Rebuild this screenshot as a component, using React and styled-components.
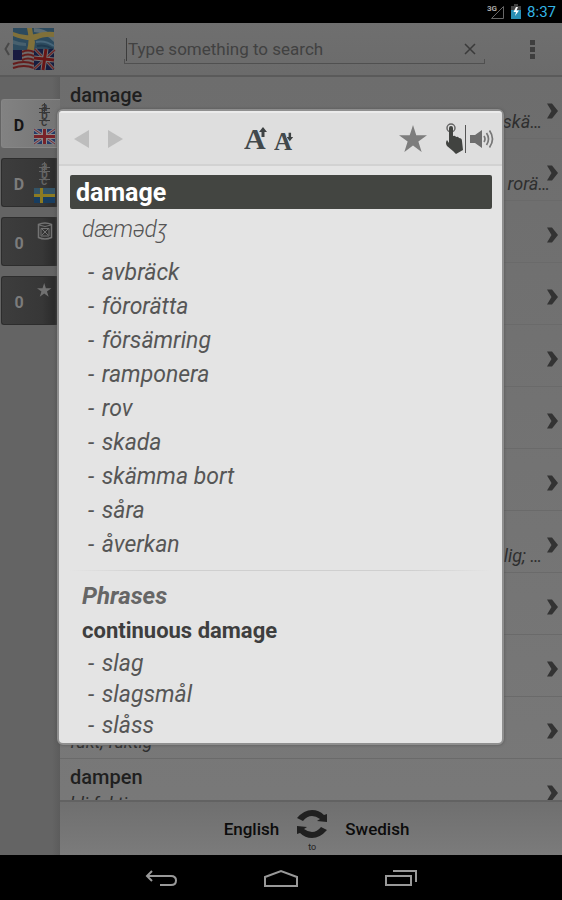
import React, { useState } from "react";
import styled, { createGlobalStyle } from "styled-components";

const GlobalStyle = createGlobalStyle`
  * {
    box-sizing: border-box;
  }
  body {
    margin: 0;
    background: #000;
    font-family: Roboto, "Noto Sans", sans-serif;
  }
  button {
    border: 0;
    padding: 0;
    background: none;
    font-family: inherit;
    cursor: pointer;
  }
  h1, h2, h3, p, ul {
    margin: 0;
    padding: 0;
  }
  ul {
    list-style: none;
  }
  svg {
    display: block;
  }
`;

const Screen = styled.div`
  position: relative;
  display: flex;
  flex-direction: column;
  height: 100vh;
  overflow: hidden;
`;

const StatusBar = styled.div`
  display: flex;
  align-items: center;
  justify-content: flex-end;
  gap: 6px;
  height: 23px;
  padding-right: 6px;
  background: #000;
  color: #33b5e5;
  font-size: 15px;
  line-height: 26px;
  flex-shrink: 0;
`;

const ActionBar = styled.header`
  display: flex;
  align-items: center;
  height: 54px;
  padding: 0 20px 0 4px;
  background: linear-gradient(#6f6f6f, #6b6b6b);
  border-bottom: 2px solid #5a5a5a;
  flex-shrink: 0;
`;

const UpButton = styled.button`
  display: flex;
  align-items: center;
  gap: 2px;
`;

const SearchBox = styled.form`
  position: relative;
  display: flex;
  align-items: center;
  flex: 1;
  height: 30px;
  margin: 0 37px 0 68px;
  padding-right: 9px;

  &::after {
    content: "";
    position: absolute;
    left: 0;
    right: 0;
    bottom: 0;
    height: 4px;
    border: 1px solid #505050;
    border-top: 0;
  }
`;

const SearchInput = styled.input`
  flex: 1;
  min-width: 0;
  height: 23px;
  padding: 0 0 0 1px;
  border: 0;
  border-left: 1px solid #3c3c3c;
  margin-left: 2px;
  background: none;
  outline: none;
  font-family: inherit;
  font-size: 17px;
  color: #222;

  &::placeholder {
    color: #414141;
    opacity: 1;
  }
`;

const Main = styled.div`
  display: flex;
  flex: 1;
  min-height: 0;
`;

const Sidebar = styled.nav`
  display: flex;
  flex-direction: column;
  gap: 10px;
  width: 60px;
  padding: 22px 0 0 1px;
  background: linear-gradient(90deg, #646464 52px, #5c5c5c);
  flex-shrink: 0;
`;

const Tab = styled.button`
  display: flex;
  align-items: center;
  height: 49px;
  padding-left: 10px;
  border-radius: 3px 0 0 3px;
  border: 1px solid ${(props) => (props.$active ? "#868686" : "#2d2d2d")};
  border-right: 0;
  background: ${(props) =>
    props.$active
      ? "linear-gradient(90deg, #828282, #747474)"
      : "linear-gradient(90deg, #3d3d3d, #373737 40px, #262626)"};
  color: ${(props) => (props.$active ? "#151515" : "#7c7c7c")};
  font-size: 16px;
  font-weight: 700;
`;

const TabLabel = styled.span`
  width: 14px;
  padding-top: 4px;
  text-align: center;
`;

const TabArt = styled.span`
  align-self: flex-start;
  margin: 3px 0 0 7px;
`;

const Content = styled.main`
  display: flex;
  flex-direction: column;
  flex: 1;
  min-width: 0;
  background: linear-gradient(#6d6d6d, #797979);
`;

const WordList = styled.ul`
  flex: 1;
  min-height: 0;
  overflow: hidden;
`;

const WordRow = styled.li`
  display: flex;
  align-items: center;
  height: 62px;
  padding: 0 3px 0 10px;
  border-bottom: 1px solid #6a6a6a;

  svg {
    margin-top: 6px;
  }
`;

const WordText = styled.div`
  display: flex;
  flex-direction: column;
  flex: 1;
  min-width: 0;
  height: 62px;
  margin-right: -4px;
  padding-top: 4px;
`;

const Word = styled.h2`
  height: 27px;
  font-size: 20px;
  line-height: 28px;
  font-weight: 500;
  color: #1f1f1f;
`;

const Meaning = styled.p`
  padding-right: ${(props) => props.$inset || 0}px;
  font-size: 18px;
  line-height: 28px;
  font-style: italic;
  text-align: ${(props) => (props.$inset === undefined ? "left" : "right")};
  color: #2e2e2e;
`;

const Footer = styled.footer`
  display: flex;
  justify-content: center;
  gap: 17px;
  height: 55px;
  padding-left: 11px;
  border-top: 2px solid #626262;
  background: linear-gradient(#6f6f6f, #7b7b7b);
  flex-shrink: 0;
`;

const Language = styled.button`
  padding-top: 1px;
  font-size: 17px;
  font-weight: 500;
  color: #0c0c0c;
`;

const SwapButton = styled.button`
  display: flex;
  flex-direction: column;
  align-items: center;
  padding-top: 8px;
  font-size: 9px;
  line-height: 12px;
  color: #222;
  gap: 3px;
`;

const NavBar = styled.div`
  display: flex;
  align-items: center;
  justify-content: center;
  gap: 84px;
  height: 45px;
  padding-top: 3px;
  background: #000;
  flex-shrink: 0;
`;

const Overlay = styled.div`
  position: absolute;
  inset: 0;
  display: flex;
  padding: 109px 58px 155px 57px;
`;

const Dialog = styled.section`
  display: flex;
  flex-direction: column;
  flex: 1;
  min-width: 0;
  border: 2px solid #8f8f8f;
  border-radius: 6px;
  background: #e4e4e4;
  box-shadow: 0 0 3px #555;
  overflow: hidden;
`;

const Toolbar = styled.div`
  display: flex;
  align-items: center;
  height: 55px;
  padding: 0 8px 0 15px;
  background: #dedede;
  border-top: 2px solid #ebebeb;
  border-bottom: 2px solid #d2d2d2;
  flex-shrink: 0;
`;

const ToolGroup = styled.div`
  display: flex;
  align-items: ${(props) => props.$align || "center"};
  gap: ${(props) => props.$gap}px;
`;

const Spacer = styled.div`
  flex: ${(props) => props.$grow};
`;

const Rule = styled.span`
  width: 1px;
  height: 28px;
  margin: 0 4px 0 2px;
  background: #555;
`;

const Entry = styled.div`
  flex: 1;
  min-height: 0;
  padding: 9px 10px 0 11px;
  overflow: hidden;
`;

const Headword = styled.h1`
  height: 34px;
  padding-left: 6px;
  border-radius: 2px;
  background: #434541;
  color: #fff;
  font-size: 25px;
  line-height: 35px;
  font-weight: 700;
`;

const Pronunciation = styled.p`
  padding: 3px 0 0 12px;
  font-size: 23px;
  line-height: 36px;
  font-weight: 300;
  font-style: italic;
  color: #555;
`;

const Translations = styled.ul`
  padding: ${(props) => (props.$line > 31 ? "8px" : "0")} 0 0 18px;

  li {
    font-size: 23px;
    line-height: ${(props) => props.$line}px;
    font-style: italic;
    color: #565656;
  }
`;

const Dash = styled.span`
  margin-right: 2px;
`;

const Divider = styled.hr`
  height: 1px;
  margin: 8px 0;
  border: 0;
  background: linear-gradient(90deg, #e4e4e4, #cfcfcf 80px, #cfcfcf 340px, #e4e4e4);
`;

const PhrasesTitle = styled.h2`
  padding-left: 12px;
  font-size: 24px;
  line-height: 35px;
  font-weight: 700;
  font-style: italic;
  color: #666;
`;

const Phrase = styled.h3`
  padding-left: 12px;
  font-size: 22px;
  line-height: 34px;
  font-weight: 700;
  color: #3e3e3e;
`;

const SignalIcon = () => (
  <svg width="18" height="18" viewBox="0 0 18 18">
    <path d="M4.500 15.500H16.500V3.500Z" fill="none" stroke="#666" />
    <text x="0" y="8" fontSize="8" fontWeight="700" fill="#aaa" stroke="#000" strokeWidth="2" paintOrder="stroke">
      3G
    </text>
  </svg>
);

const BatteryIcon = () => (
  <svg width="10" height="15" viewBox="0 0 10 15">
    <path d="M3 0H7V2H10V15H0V2H3Z" fill="#424242" />
    <path d="M0 6H10V15H0Z" fill="#298fb5" />
    <path d="M5 3L2.500 8H5L4 12L8 6.500H5.500L7 3Z" fill="#fff" />
  </svg>
);

const LogoIcon = () => (
  <svg width="44" height="46" viewBox="0 0 44 46">
    <defs>
      <filter id="soft" x="-10%" y="-10%" width="120%" height="120%" colorInterpolationFilters="sRGB">
        <feGaussianBlur stdDeviation="0.7" />
      </filter>
    </defs>
    <g filter="url(#soft)">
      <path d="M1 2H42V24H1Z" fill="#2c4a5e" />
      <path d="M22 2Q32 2 42 10V16Q32 6 22 6Z" fill="#5b6b73" />
      <path d="M1 14Q8 17 14 17V20Q7 20 1 18Z" fill="#47606e" />
      <path d="M1 6Q13 11 23 8Q33 5 42 6V11Q32 10 24 14Q12 15 1 10Z" fill="#80703a" />
      <path d="M15 2H20Q21 10 23 16L22 24H15Q18 14 15 2Z" fill="#80703a" />
      <path d="M24 16Q33 14 42 20" stroke="#47667a" strokeWidth="2" fill="none" />
      <path d="M25 20Q33 18 41 23" stroke="#1f394e" strokeWidth="2" fill="none" />
      <path d="M1 24H23V44H1Z" fill="#6f6a6a" />
      <path d="M1 24H10V34H1Z" fill="#191a40" />
      <path
        d="M10 26Q16 23 22 26M10 30Q16 27 22 30M10 34Q16 31 22 34M1 38Q12 34 22 38M1 42Q12 38 22 42"
        stroke="#641c1c"
        strokeWidth="2"
        fill="none"
      />
      <path d="M22 23H42V44H22Z" fill="#161d40" />
      <path d="M23 23L42 43M43 24L22 43" stroke="#68686c" strokeWidth="3" />
      <path d="M23 23L42 43M43 24L22 43" stroke="#702525" strokeWidth="1.200" />
      <path d="M34 23L31 44M22 32L42 34" stroke="#747474" strokeWidth="5" />
      <path d="M34 23L31 44M22 32L42 34" stroke="#681515" strokeWidth="3" />
    </g>
  </svg>
);

// stacked letters on a staff of thin lines
const Abc = ({ color }) => (
  <g>
    <text x="8 8 8" y="8 16 23" fontSize="12" fontWeight="500" fill={color}>
      abc
    </text>
    <path d="M11.500 0V11M6 5.500H17M6 9.500H17M6 17.500H17" stroke={color} fill="none" />
  </g>
);

const EnglishTabIcon = () => (
  <svg width="24" height="44" viewBox="0 0 24 44">
    <Abc color="#383838" />
    <path d="M1 26H22V41H1Z" fill="#233b69" />
    <path d="M1 26L22 41M22 26L1 41" stroke="#808088" strokeWidth="3" />
    <path d="M1 26L22 41M22 26L1 41" stroke="#782e35" />
    <path d="M11.500 26V41M1 33.500H22" stroke="#8b8b8b" strokeWidth="5" />
    <path d="M11.500 26V41M1 33.500H22" stroke="#782329" strokeWidth="3" />
  </svg>
);

const SwedishTabIcon = () => (
  <svg width="24" height="44" viewBox="0 0 24 44">
    <Abc color="#656565" />
    <path d="M1 26H22V41H1Z" fill="#183d60" />
    <path d="M1 26H22V33H1Z" fill="#335366" />
    <path d="M8.500 26V41M1 33.500H22" stroke="#8c7b22" strokeWidth="3" />
  </svg>
);

const HistoryTabIcon = () => (
  <svg width="24" height="42" viewBox="0 0 24 42" fill="none" stroke="#737373">
    <path d="M5.500 3.500Q12 0.500 18.500 3.500V16.500Q12 19.500 5.500 16.500Z" strokeWidth="1.500" />
    <path d="M6 4Q12 7 18 4M8 7.500H16V15H8ZM9 8L15 14M15 8L9 14" />
  </svg>
);

const STAR = "M12 0L14.800 8.800H24L16.600 14L19.400 23L12 17.500L4.600 23L7.400 14L0 8.800H9.200Z";

const StarTabIcon = () => (
  <svg width="24" height="42" viewBox="0 0 24 42">
    <path d={STAR} fill="#717171" transform="translate(4 3) scale(0.6)" />
  </svg>
);

const Chevron = () => (
  <svg width="13" height="16" viewBox="0 0 13 16">
    <path d="M1 0.500H6L12 8L6 15.500H1L5.500 8Z" fill="#333" />
  </svg>
);

// letter with a small arrow showing whether the text grows or shrinks
const FontSizeIcon = ({ width, height, up }) => (
  <svg width={width} height={height} viewBox="0 0 24 36">
    <text x="0" y="28" fontFamily="Liberation Serif, serif" fontWeight="700" fontSize="30" fill="#42494c">
      A
    </text>
    <path
      d={up ? "M19 6L23 11H20.500V16H17.500V11H15Z" : "M17.500 7H20.500V12H23L19 17L15 12H17.500Z"}
      fill="#3e4243"
      stroke="#dedede"
      strokeWidth="1"
      paintOrder="stroke"
    />
  </svg>
);

const HandIcon = () => (
  <svg width="18" height="32" viewBox="0 0 18 32">
    <circle cx="6" cy="5" r="4" fill="none" stroke="#666" strokeWidth="1.500" />
    <path
      d="M4 5Q4 3 6 3T8 5V13Q10 12 11 14Q13 13 14 15Q17 15 17 18L18 27L11 31L8 28L2 23Q0 20 2 17L4 20Z"
      fill="#414340"
    />
  </svg>
);

const SpeakerIcon = () => (
  <svg width="24" height="20" viewBox="0 0 24 20">
    <path d="M0 6H5L12 1V19L5 14H0Z" fill="#6d6d6d" />
    <path
      d="M14 7Q16 10 14 13M16.500 4Q20.500 10 16.500 16M19.500 1.500Q25.500 10 19.500 18.500"
      stroke="#777"
      strokeWidth="1.700"
      fill="none"
    />
  </svg>
);

const SwapIcon = () => (
  <svg width="32" height="28" viewBox="0 0 32 28" fill="#202020">
    <path d="M1 8Q8 0 16 0Q23 0 28 5L31 4V12L21 11L24 9Q20 6 16 6Q11 6 7 11Z" />
    <path d="M31 20Q24 28 16 28Q9 28 4 23L1 24V16L11 17L8 19Q12 22 16 22Q21 22 25 17Z" />
  </svg>
);

const words = [
  { title: "damage", meaning: "skä…", inset: 8 },
  { meaning: "rorä…", inset: 0 },
  {},
  {},
  {},
  {},
  {},
  { meaning: "lig; …", inset: 8 },
  {},
  {},
  { meaning: "fukt, fuktig" },
  { title: "dampen", meaning: "bli fuktig" },
];

const tabs = [
  { label: "D", name: "English words", icon: <EnglishTabIcon /> },
  { label: "D", name: "Swedish words", icon: <SwedishTabIcon /> },
  { label: "0", name: "History", icon: <HistoryTabIcon /> },
  { label: "0", name: "Favourites", icon: <StarTabIcon /> },
];

const translations = [
  "avbräck",
  "förorätta",
  "försämring",
  "ramponera",
  "rov",
  "skada",
  "skämma bort",
  "såra",
  "åverkan",
];

const phraseTranslations = ["slag", "slagsmål", "slåss"];

const App = () => {
  const [query, setQuery] = useState("");
  const [activeTab, setActiveTab] = useState(0);

  return (
    <Screen>
      <GlobalStyle />
      <StatusBar>
        <SignalIcon />
        <BatteryIcon />
        <span>8:37</span>
      </StatusBar>
      <ActionBar>
        <UpButton aria-label="Navigate up">
          <svg width="6" height="14" viewBox="0 0 6 14">
            <path d="M5 1L1.500 7L5 13" fill="none" stroke="#484848" strokeWidth="2" />
          </svg>
          <LogoIcon />
        </UpButton>
        <SearchBox onSubmit={(e) => e.preventDefault()}>
          <SearchInput
            aria-label="Search"
            placeholder="Type something to search"
            value={query}
            onChange={(e) => setQuery(e.target.value)}
          />
          <button type="button" aria-label="Clear" onClick={() => setQuery("")}>
            <svg width="12" height="12" viewBox="0 0 12 12">
              <path d="M1 1L11 11M11 1L1 11" stroke="#3a3a3a" strokeWidth="1.500" />
            </svg>
          </button>
        </SearchBox>
        <button aria-label="More options">
          <svg width="20" height="20" viewBox="0 0 20 20" fill="#3e3e3e">
            <path d="M8 1H13V6H8ZM8 8H13V13H8ZM8 15H13V20H8Z" />
          </svg>
        </button>
      </ActionBar>
      <Main>
        <Sidebar>
          {tabs.map((tab, index) => (
            <Tab
              key={tab.name}
              aria-label={tab.name}
              $active={index === activeTab}
              onClick={() => setActiveTab(index)}
            >
              <TabLabel>{tab.label}</TabLabel>
              <TabArt>{tab.icon}</TabArt>
            </Tab>
          ))}
        </Sidebar>
        <Content>
          <WordList>
            {words.map((word, index) => (
              <WordRow key={index}>
                <WordText>
                  <Word as={word.title ? "h2" : "div"}>{word.title}</Word>
                  <Meaning $inset={word.inset}>{word.meaning}</Meaning>
                </WordText>
                <Chevron />
              </WordRow>
            ))}
          </WordList>
          <Footer>
            <Language>English</Language>
            <SwapButton aria-label="Swap languages">
              <SwapIcon />
              to
            </SwapButton>
            <Language>Swedish</Language>
          </Footer>
        </Content>
      </Main>
      <NavBar>
        <button aria-label="Back">
          <svg width="34" height="20" viewBox="0 0 34 20" fill="none" stroke="#999" strokeWidth="2">
            <path d="M7 2L2 7L7 12M2 7H26Q31 7 31 11.500T26 16H15" />
          </svg>
        </button>
        <button aria-label="Home">
          <svg width="36" height="20" viewBox="0 0 36 20" fill="none" stroke="#999" strokeWidth="2">
            <path d="M2 17V8L18 2L34 8V17Z" />
          </svg>
        </button>
        <button aria-label="Recent apps">
          <svg width="34" height="20" viewBox="0 0 34 20" fill="none" stroke="#999" strokeWidth="2">
            <path d="M3 7H28V16H3ZM10 2H33V13" />
          </svg>
        </button>
      </NavBar>
      <Overlay>
        <Dialog role="dialog" aria-label="damage">
          <Toolbar>
            <ToolGroup $gap={17}>
              <button aria-label="Previous word">
                <svg width="16" height="18" viewBox="0 0 16 18">
                  <path d="M0 9L15 0V18Z" fill="#bdbdbd" />
                </svg>
              </button>
              <button aria-label="Next word">
                <svg width="16" height="18" viewBox="0 0 16 18">
                  <path d="M16 9L1 0V18Z" fill="#bdbdbd" />
                </svg>
              </button>
            </ToolGroup>
            <Spacer $grow={8} />
            <ToolGroup $gap={6} $align="flex-end">
              <button aria-label="Larger text">
                <FontSizeIcon width={24} height={36} up />
              </button>
              <button aria-label="Smaller text">
                <FontSizeIcon width={20} height={30} />
              </button>
            </ToolGroup>
            <Spacer $grow={7} />
            <ToolGroup $gap={18}>
              <button aria-label="Add to favourites">
                <svg width="28" height="27" viewBox="0 0 24 23">
                  <path d={STAR} fill="#7d7d7d" />
                </svg>
              </button>
              <ToolGroup $gap={0}>
                <button aria-label="Tap to translate">
                  <HandIcon />
                </button>
                <Rule />
                <button aria-label="Speak">
                  <SpeakerIcon />
                </button>
              </ToolGroup>
            </ToolGroup>
          </Toolbar>
          <Entry>
            <Headword>damage</Headword>
            <Pronunciation>dæmədʒ</Pronunciation>
            <Translations $line={34}>
              {translations.map((text) => (
                <li key={text}>
                  <Dash>-</Dash> {text}
                </li>
              ))}
            </Translations>
            <Divider />
            <PhrasesTitle>Phrases</PhrasesTitle>
            <Phrase>continuous damage</Phrase>
            <Translations $line={31}>
              {phraseTranslations.map((text) => (
                <li key={text}>
                  <Dash>-</Dash> {text}
                </li>
              ))}
            </Translations>
          </Entry>
        </Dialog>
      </Overlay>
    </Screen>
  );
};

export default App;
